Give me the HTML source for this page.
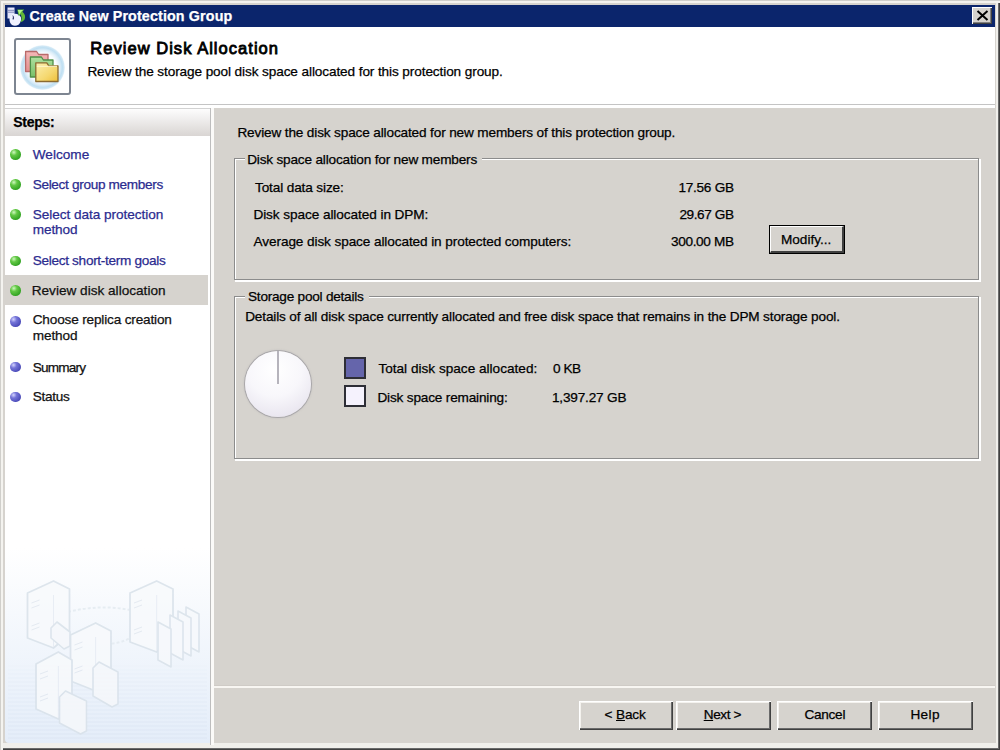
<!DOCTYPE html>
<html><head><meta charset="utf-8"><style>
html,body{margin:0;padding:0;width:1000px;height:750px;overflow:hidden;position:relative}
.t{position:absolute;font-family:"Liberation Sans",sans-serif;line-height:1;white-space:nowrap;-webkit-text-stroke:0.25px currentColor}
u{text-decoration:underline;text-underline-offset:1px}
</style></head><body>
<div style="position:absolute;left:0;top:0;width:1000px;height:750px;background:#d6d3ce;box-shadow:inset 1px 1px 0 #d0cfcb, inset 3px 3px 0 #f4f3ef, inset -1px -1px 0 #404040, inset -2px -2px 0 #6a6a6a, inset -4px -4px 0 #f0efeb"></div>
<div style="position:absolute;left:5px;top:5px;width:990px;height:22px;background:#0b256c"></div>
<div style="position:absolute;left:972px;top:7px;width:20px;height:17px;background:#d6d3ce;box-shadow:inset 1px 1px 0 #fff, inset -1px -1px 0 #404040, inset -2px -2px 0 #808080"></div>
<svg style="position:absolute;left:972px;top:7px" width="20" height="17"><path d="M5.5 4 L15.5 13 M15.5 4 L5.5 13" stroke="#000" stroke-width="2"/></svg>
<div style="position:absolute;left:5px;top:27px;width:990px;height:77px;background:#fff"></div>
<div style="position:absolute;left:5px;top:104px;width:990px;height:1px;background:#c4c4c4"></div>
<div style="position:absolute;left:5px;top:105px;width:990px;height:3px;background:#fff"></div>
<div style="position:absolute;left:14px;top:38px;width:53px;height:53px;border:2px solid #7d8591;border-radius:3px;background:#fff"></div>
<div style="position:absolute;left:20px;top:44.5px;width:45px;height:45px;border-radius:50%;background:radial-gradient(circle closest-side,#fff 0%,#fbfdff 62%,#dcedf8 78%,#bfdff2 88%,#cfe7f5 95%,rgba(230,242,250,0.5) 100%)"></div>
<svg style="position:absolute;left:0;top:0" width="80" height="100" viewBox="0 0 80 100"><defs><linearGradient id="yg" x1="0" y1="0" x2="1" y2="1"><stop offset="0" stop-color="#fbefb0"/><stop offset="0.6" stop-color="#f5d870"/><stop offset="1" stop-color="#eebf38"/></linearGradient><linearGradient id="rg" x1="0" y1="0" x2="0" y2="1"><stop offset="0" stop-color="#f4b8b8"/><stop offset="1" stop-color="#e49090"/></linearGradient><linearGradient id="gg" x1="0" y1="0" x2="0" y2="1"><stop offset="0" stop-color="#b0e0a0"/><stop offset="1" stop-color="#78c068"/></linearGradient></defs><path d="M25.6 51.5 h11 l2 3 H48 V71.5 H25.6 Z" fill="url(#rg)" stroke="#b86a6a" stroke-width="1.3" stroke-linejoin="round"/><path d="M30.4 57 h11 l2 3 H53 V77 H30.4 Z" fill="url(#gg)" stroke="#4f8f48" stroke-width="1.3" stroke-linejoin="round"/><path d="M35.8 62.8 h11 l2 3 H58 V81.5 H35.8 Z" fill="url(#yg)" stroke="#8a6a30" stroke-width="1.3" stroke-linejoin="round"/><path d="M36.8 66.3 H57" stroke="#fff8d0" stroke-width="1"/></svg>
<svg style="position:absolute;left:0;top:0" width="30" height="30" viewBox="0 0 30 30"><path d="M7.5 7.5 h7 v11 h-7z" fill="#e4e6fa"/><path d="M8 10.3 h6 M8 12.2 h6" stroke="#8088b8" stroke-width="1"/><path d="M9.5 18.5 Q10 14 14.5 13.8 Q19 13.5 21 17.5 Q21.5 22 18.5 24.8 Q15 26.5 12 25 Q9.2 22.5 9.5 18.5z" fill="#f0f1ff"/><path d="M12.3 15.2 Q14.5 16 14 19 Q13 20 12.5 19 Q13.5 17 12.3 15.2z" fill="#3a3f70"/><path d="M17.3 9.6 L24.2 9.6 L22.4 11.8 Q26.3 15.2 24.6 19.4 Q23.2 21.6 20.4 22.2 Q22.8 18.2 20.6 14.2 L18.6 16z" fill="#62b838"/><path d="M17.8 10 L23 10 Q20.5 12 19.5 14.5z" fill="#b4f48a"/></svg>
<div style="position:absolute;left:5px;top:108px;width:205px;height:635px;border-bottom-left-radius:4px;background:linear-gradient(#fff 0px,#fff 440px,#e4edf9 635px)"></div>
<div style="position:absolute;left:3px;top:743px;width:993px;height:3px;background:#f0efeb"></div>
<div style="position:absolute;left:5px;top:108px;width:205px;height:28px;border-top:1px solid #d2d2d2;box-sizing:border-box;background:linear-gradient(#fdfdfd,#d9d5d3)"></div>
<div style="position:absolute;left:210px;top:108px;width:1px;height:637px;background:#bdbdbd"></div>
<div style="position:absolute;left:211px;top:108px;width:3px;height:637px;background:#fbfaf8"></div>
<svg style="position:absolute;left:0;top:0" width="215" height="750" viewBox="0 0 215 750"><defs><filter id="bl"><feGaussianBlur stdDeviation="0.7"/></filter></defs><path d="M8 666 H207" stroke="#dce6f3" stroke-width="1.2" opacity="0.15"/><path d="M8 670 H207" stroke="#dce6f3" stroke-width="1.2" opacity="0.19"/><path d="M8 674 H207" stroke="#dce6f3" stroke-width="1.2" opacity="0.23"/><path d="M8 678 H207" stroke="#dce6f3" stroke-width="1.2" opacity="0.27"/><path d="M8 682 H207" stroke="#dce6f3" stroke-width="1.2" opacity="0.31"/><path d="M8 686 H207" stroke="#dce6f3" stroke-width="1.2" opacity="0.35"/><path d="M8 690 H207" stroke="#dce6f3" stroke-width="1.2" opacity="0.39"/><path d="M8 694 H207" stroke="#dce6f3" stroke-width="1.2" opacity="0.43"/><path d="M8 698 H207" stroke="#dce6f3" stroke-width="1.2" opacity="0.47"/><path d="M8 702 H207" stroke="#dce6f3" stroke-width="1.2" opacity="0.51"/><path d="M8 706 H207" stroke="#dce6f3" stroke-width="1.2" opacity="0.54"/><path d="M8 710 H207" stroke="#dce6f3" stroke-width="1.2" opacity="0.58"/><path d="M8 714 H207" stroke="#dce6f3" stroke-width="1.2" opacity="0.62"/><path d="M8 718 H207" stroke="#dce6f3" stroke-width="1.2" opacity="0.66"/><path d="M8 722 H207" stroke="#dce6f3" stroke-width="1.2" opacity="0.70"/><path d="M8 726 H207" stroke="#dce6f3" stroke-width="1.2" opacity="0.74"/><path d="M8 730 H207" stroke="#dce6f3" stroke-width="1.2" opacity="0.78"/><path d="M8 734 H207" stroke="#dce6f3" stroke-width="1.2" opacity="0.82"/><path d="M8 738 H207" stroke="#dce6f3" stroke-width="1.2" opacity="0.86"/><g filter="url(#bl)" opacity="0.85"><path d="M68 612 Q100 604 130 610 M92 640 Q112 648 130 638" stroke="#e4ebf1" stroke-width="2" stroke-dasharray="3 2" fill="none"/><path d="M27.5 593 L53.54 581 L69.5 589 L69.5 634 L53.54 648 L27.5 638 Z" fill="#f8fafc" stroke="#d9e2ea" stroke-width="1.8" stroke-linejoin="round"/><path d="M53.54 595 V647" stroke="#e6ebf3" stroke-width="1"/><path d="M31.5 603 l8 -3 M31.5 608 l8 -3 M31.5 626 l8 -3 M31.5 630 l8 -3" stroke="#e2e8f0" stroke-width="1"/><path d="M51 628 L57 622 L70 632 L70 646 L64 649 L51 638 Z" fill="#f6f8fb" stroke="#d9e2ea" stroke-width="1.6" stroke-linejoin="round"/><path d="M130 593 L156.66 581 L173 589 L173 638 L156.66 652 L130 642 Z" fill="#f8fafc" stroke="#d9e2ea" stroke-width="1.8" stroke-linejoin="round"/><path d="M156.66 595 V651" stroke="#e6ebf3" stroke-width="1"/><path d="M134 603 l8 -3 M134 608 l8 -3 M134 630 l8 -3 M134 634 l8 -3" stroke="#e2e8f0" stroke-width="1"/><path d="M186 607 L199 614 L199 652 L186 645 Z" fill="#f7f9fc" stroke="#d9e2ea" stroke-width="1.6" stroke-linejoin="round"/><path d="M178 611 L191 618 L191 656 L178 649 Z" fill="#f7f9fc" stroke="#d9e2ea" stroke-width="1.6" stroke-linejoin="round"/><path d="M170 615 L183 622 L183 660 L170 653 Z" fill="#f7f9fc" stroke="#d9e2ea" stroke-width="1.6" stroke-linejoin="round"/><path d="M158 622 L171 629 L171 667 L158 660 Z" fill="#f7f9fc" stroke="#d9e2ea" stroke-width="1.6" stroke-linejoin="round"/><path d="M70.5 635 L95.61 623 L111 631 L111 677 L95.61 691 L70.5 681 Z" fill="#f8fafc" stroke="#d9e2ea" stroke-width="1.8" stroke-linejoin="round"/><path d="M95.61 637 V690" stroke="#e6ebf3" stroke-width="1"/><path d="M74.5 645 l8 -3 M74.5 650 l8 -3 M74.5 669 l8 -3 M74.5 673 l8 -3" stroke="#e2e8f0" stroke-width="1"/><path d="M93 668 L99 662 L118 672 L118 704 L112 707 L93 696 Z" fill="#f6f8fb" stroke="#d9e2ea" stroke-width="1.6" stroke-linejoin="round"/><path d="M36 664 L58.32 652 L72 660 L72 705 L58.32 719 L36 709 Z" fill="#f8fafc" stroke="#d9e2ea" stroke-width="1.8" stroke-linejoin="round"/><path d="M58.32 666 V718" stroke="#e6ebf3" stroke-width="1"/><path d="M40 674 l8 -3 M40 679 l8 -3 M40 697 l8 -3 M40 701 l8 -3" stroke="#e2e8f0" stroke-width="1"/><path d="M59.5 697 L65.5 691 L86.5 701 L86.5 731 L80.5 734 L59.5 723 Z" fill="#f6f8fb" stroke="#d9e2ea" stroke-width="1.6" stroke-linejoin="round"/></g></svg>
<div style="position:absolute;left:5px;top:275px;width:203px;height:30px;background:#d6d3ce"></div>
<div style="position:absolute;left:10px;top:149.4px;width:10.5px;height:10.5px;border-radius:50%;background:radial-gradient(circle at 35% 30%, #d0f8c0 0%, #62c844 30%, #34a424 72%, #70c860 100%)"></div>
<div style="position:absolute;left:10px;top:179.3px;width:10.5px;height:10.5px;border-radius:50%;background:radial-gradient(circle at 35% 30%, #d0f8c0 0%, #62c844 30%, #34a424 72%, #70c860 100%)"></div>
<div style="position:absolute;left:10px;top:209.4px;width:10.5px;height:10.5px;border-radius:50%;background:radial-gradient(circle at 35% 30%, #d0f8c0 0%, #62c844 30%, #34a424 72%, #70c860 100%)"></div>
<div style="position:absolute;left:10px;top:255.6px;width:10.5px;height:10.5px;border-radius:50%;background:radial-gradient(circle at 35% 30%, #d0f8c0 0%, #62c844 30%, #34a424 72%, #70c860 100%)"></div>
<div style="position:absolute;left:10px;top:285.3px;width:10.5px;height:10.5px;border-radius:50%;background:radial-gradient(circle at 35% 30%, #d0f8c0 0%, #62c844 30%, #34a424 72%, #70c860 100%)"></div>
<div style="position:absolute;left:10px;top:316.0px;width:10.5px;height:10.5px;border-radius:50%;background:radial-gradient(circle at 32% 30%, #d4d4ff 0%, #7474d8 30%, #4a4ab8 75%, #6c6cc8 100%)"></div>
<div style="position:absolute;left:10px;top:361.8px;width:10.5px;height:10.5px;border-radius:50%;background:radial-gradient(circle at 32% 30%, #d4d4ff 0%, #7474d8 30%, #4a4ab8 75%, #6c6cc8 100%)"></div>
<div style="position:absolute;left:10px;top:391.5px;width:10.5px;height:10.5px;border-radius:50%;background:radial-gradient(circle at 32% 30%, #d4d4ff 0%, #7474d8 30%, #4a4ab8 75%, #6c6cc8 100%)"></div>
<div style="position:absolute;left:214px;top:685px;width:781px;height:1px;background:#cfcbc6"></div>
<div style="position:absolute;left:214px;top:686px;width:781px;height:2px;background:#f8f6f2"></div>
<div style="position:absolute;left:235px;top:159px;width:743px;height:120px;border:1px solid #fff;border-right-width:2px;border-bottom-width:2px"></div><div style="position:absolute;left:234px;top:158px;width:743px;height:120px;border:1px solid #8c8c8c"></div>
<div style="position:absolute;left:235px;top:297px;width:743px;height:161px;border:1px solid #fff;border-right-width:2px;border-bottom-width:2px"></div><div style="position:absolute;left:234px;top:296px;width:743px;height:161px;border:1px solid #8c8c8c"></div>
<div style="position:absolute;left:245px;top:150px;width:237px;height:14px;background:#d6d3ce"></div>
<div style="position:absolute;left:245px;top:288px;width:124px;height:14px;background:#d6d3ce"></div>
<div style="position:absolute;left:769px;top:225px;width:74px;height:27px;border:1px solid #000;background:#d6d3ce"><div style="position:absolute;left:0;top:0;right:0;bottom:0;border-top:1px solid #fff;border-left:1px solid #fff;border-right:2px solid #404040;border-bottom:2px solid #404040"></div></div>
<div style="position:absolute;left:579px;top:701px;width:94px;height:29px;background:#d6d3ce;box-shadow:inset 1px 1px 0 #fff, inset -1px -1px 0 #404040, inset -2px -2px 0 #6a6a6a, inset 2px 2px 0 #f4f2ee"></div>
<div style="position:absolute;left:676px;top:701px;width:95px;height:29px;background:#d6d3ce;box-shadow:inset 1px 1px 0 #fff, inset -1px -1px 0 #404040, inset -2px -2px 0 #6a6a6a, inset 2px 2px 0 #f4f2ee"></div>
<div style="position:absolute;left:777px;top:701px;width:95px;height:29px;background:#d6d3ce;box-shadow:inset 1px 1px 0 #fff, inset -1px -1px 0 #404040, inset -2px -2px 0 #6a6a6a, inset 2px 2px 0 #f4f2ee"></div>
<div style="position:absolute;left:878px;top:701px;width:95px;height:29px;background:#d6d3ce;box-shadow:inset 1px 1px 0 #fff, inset -1px -1px 0 #404040, inset -2px -2px 0 #6a6a6a, inset 2px 2px 0 #f4f2ee"></div>
<div style="position:absolute;left:244.5px;top:350.5px;width:66px;height:66px;border-radius:50%;background:radial-gradient(circle at 45% 28%, #ffffff 0%, #f8f7fb 45%, #eae7f0 78%, #d6d2dc 95%, #c4c0ca 100%);box-shadow:0 0 0 1px rgba(150,148,155,0.6), 0 0 2px 1px rgba(150,148,155,0.35)"></div>
<div style="position:absolute;left:277px;top:351px;width:2px;height:33px;background:#b6b4bc"></div>
<div style="position:absolute;left:344px;top:357px;width:18px;height:18px;border:2px solid #2e2e36;background:#6565ab"></div>
<div style="position:absolute;left:344px;top:385px;width:18px;height:18px;border:2px solid #2e2e36;background:#f5f2fd"></div>
<div class="t" style="left:29.50px;top:9.15px;font-size:14.3px;font-weight:bold;color:#fff;letter-spacing:0.128px">Create New Protection Group</div>
<div class="t" style="left:90.30px;top:39.83px;font-size:16.5px;font-weight:normal;color:#000;letter-spacing:1.033px;-webkit-text-stroke:0.85px #000">Review Disk Allocation</div>
<div class="t" style="left:87.40px;top:64.69px;font-size:13.6px;font-weight:normal;color:#000;letter-spacing:-0.100px">Review the storage pool disk space allocated for this protection group.</div>
<div class="t" style="left:13.30px;top:115.45px;font-size:14px;font-weight:bold;color:#000;letter-spacing:-0.285px">Steps:</div>
<div class="t" style="left:32.70px;top:147.79px;font-size:13.6px;font-weight:normal;color:#2b2b8f;letter-spacing:0.026px">Welcome</div>
<div class="t" style="left:32.70px;top:177.79px;font-size:13.6px;font-weight:normal;color:#2b2b8f;letter-spacing:-0.324px">Select group members</div>
<div class="t" style="left:32.70px;top:207.69px;font-size:13.6px;font-weight:normal;color:#2b2b8f;letter-spacing:-0.040px">Select data protection</div>
<div class="t" style="left:32.70px;top:223.29px;font-size:13.6px;font-weight:normal;color:#2b2b8f;letter-spacing:-0.096px">method</div>
<div class="t" style="left:32.70px;top:254.29px;font-size:13.6px;font-weight:normal;color:#2b2b8f;letter-spacing:-0.303px">Select short-term goals</div>
<div class="t" style="left:31.70px;top:283.59px;font-size:13.6px;font-weight:normal;color:#111;letter-spacing:0.006px">Review disk allocation</div>
<div class="t" style="left:32.70px;top:313.49px;font-size:13.6px;font-weight:normal;color:#111;letter-spacing:-0.166px">Choose replica creation</div>
<div class="t" style="left:32.70px;top:329.29px;font-size:13.6px;font-weight:normal;color:#111;letter-spacing:-0.096px">method</div>
<div class="t" style="left:32.70px;top:360.79px;font-size:13.6px;font-weight:normal;color:#111;letter-spacing:-0.810px">Summary</div>
<div class="t" style="left:32.70px;top:390.49px;font-size:13.6px;font-weight:normal;color:#111;letter-spacing:-0.288px">Status</div>
<div class="t" style="left:237.40px;top:125.79px;font-size:13.6px;font-weight:normal;color:#000;letter-spacing:-0.141px">Review the disk space allocated for new members of this protection group.</div>
<div class="t" style="left:247.20px;top:153.09px;font-size:13.6px;font-weight:normal;color:#000;letter-spacing:-0.180px">Disk space allocation for new members</div>
<div class="t" style="left:255.00px;top:180.69px;font-size:13.6px;font-weight:normal;color:#000;letter-spacing:-0.127px">Total data size:</div>
<div class="t" style="left:253.40px;top:207.89px;font-size:13.6px;font-weight:normal;color:#000;letter-spacing:-0.067px">Disk space allocated in DPM:</div>
<div class="t" style="left:253.60px;top:235.29px;font-size:13.6px;font-weight:normal;color:#000;letter-spacing:-0.095px">Average disk space allocated in protected computers:</div>
<div class="t" style="left:248.00px;top:290.49px;font-size:13.6px;font-weight:normal;color:#000;letter-spacing:-0.230px">Storage pool details</div>
<div class="t" style="left:245.20px;top:310.49px;font-size:13.6px;font-weight:normal;color:#000;letter-spacing:-0.147px">Details of all disk space currently allocated and free disk space that remains in the DPM storage pool.</div>
<div class="t" style="left:378.40px;top:361.99px;font-size:13.6px;font-weight:normal;color:#000;letter-spacing:0.007px">Total disk space allocated:</div>
<div class="t" style="left:553.00px;top:361.99px;font-size:13.6px;font-weight:normal;color:#000;letter-spacing:-0.468px">0 KB</div>
<div class="t" style="left:377.40px;top:390.79px;font-size:13.6px;font-weight:normal;color:#000;letter-spacing:-0.168px">Disk space remaining:</div>
<div class="t" style="left:552.00px;top:390.79px;font-size:13.6px;font-weight:normal;color:#000;letter-spacing:-0.187px">1,397.27 GB</div>
<div class="t" style="left:678.40px;top:180.59px;font-size:13.6px;font-weight:normal;color:#000;letter-spacing:-0.253px">17.56 GB</div>
<div class="t" style="left:679.40px;top:207.89px;font-size:13.6px;font-weight:normal;color:#000;letter-spacing:-0.395px">29.67 GB</div>
<div class="t" style="left:671.00px;top:235.29px;font-size:13.6px;font-weight:normal;color:#000;letter-spacing:-0.335px">300.00 MB</div>
<div class="t" style="left:780.90px;top:232.99px;font-size:13.6px;font-weight:normal;color:#000;letter-spacing:0.015px">Modify...</div>
<div class="t" style="left:604.60px;top:708.49px;font-size:13.6px;font-weight:normal;color:#000;letter-spacing:-0.148px">&lt; <u>B</u>ack</div>
<div class="t" style="left:703.70px;top:708.49px;font-size:13.6px;font-weight:normal;color:#000;letter-spacing:-0.386px"><u>N</u>ext &gt;</div>
<div class="t" style="left:804.50px;top:708.49px;font-size:13.6px;font-weight:normal;color:#000;letter-spacing:-0.279px">Cancel</div>
<div class="t" style="left:910.40px;top:708.49px;font-size:13.6px;font-weight:normal;color:#000;letter-spacing:0.401px">Help</div>
</body></html>
